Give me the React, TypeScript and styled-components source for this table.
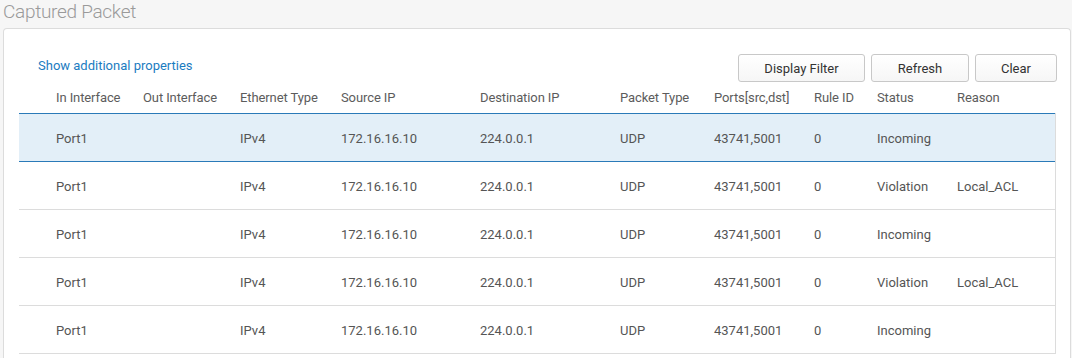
import React from "react";
import styled, { createGlobalStyle } from "styled-components";

const Global = createGlobalStyle`
  html, body { margin: 0; padding: 0; background: #f6f6f6; }
  body { font-family: Roboto, "Liberation Sans", sans-serif; width: 1072px; height: 358px; overflow: hidden; }
`;

const Page = styled.div`
  padding: 0 1px 0 3px;
`;

const Title = styled.h1`
  margin: 0;
  height: 28px;
  font-size: 19px;
  font-weight: 300;
  line-height: 24px;
  color: #9a9a9a;
  letter-spacing: -0.3px;
`;

const Panel = styled.div`
  background: #fff;
  border: 1px solid #dcdcdc;
  border-bottom: none;
  border-radius: 4px 4px 0 0;
  padding: 25px 14px 0 15px;
  height: 330px;
  box-sizing: border-box;
`;

const Toolbar = styled.div`
  display: flex;
  align-items: center;
  justify-content: space-between;
  padding-left: 19px;
  margin-right: -1px;
`;

const Link = styled.a`
  font-size: 13px;
  color: #1b7cc1;
  text-decoration: none;
  cursor: pointer;
  margin-top: -6px;
`;

const Buttons = styled.div`
  display: flex;
  gap: 6px;
`;

const Button = styled.button<{ $w: number }>`
  width: ${(p) => p.$w}px;
  height: 28px;
  border: 1px solid #c8c8c8;
  border-radius: 3px;
  background: linear-gradient(#ffffff, #f6f6f6);
  font-family: inherit;
  font-size: 13px;
  color: #333;
  padding: 0;
`;

const cols = "87px 97px 101px 139px 140px 94px 100px 63px 80px 1fr";

const Table = styled.div`
  margin-top: 2px;
`;

const HeadRow = styled.div`
  display: grid;
  grid-template-columns: ${cols};
  padding-left: 37px;
  padding-bottom: 2px;
  height: 29px;
  box-sizing: border-box;
  align-items: center;
  font-size: 13px;
  font-weight: 400;
  color: #5c5c5c;
  letter-spacing: -0.1px;
`;

const Body = styled.div`
  border-right: 1px solid #dcdcdc;
`;

const Row = styled.div<{ $selected?: boolean }>`
  display: grid;
  grid-template-columns: ${cols};
  padding-left: 37px;
  padding-top: 2px;
  height: ${(p) => (p.$selected ? 49 : 48)}px;
  box-sizing: border-box;
  align-items: center;
  font-size: 13px;
  color: #555;
  background: ${(p) => (p.$selected ? "#e3eff8" : "#fff")};
  border-top: ${(p) => (p.$selected ? "1px solid #2a7ab8" : "none")};
  border-bottom: 1px solid ${(p) => (p.$selected ? "#2a7ab8" : "#dcdcdc")};
`;

const Cell = styled.span`
  white-space: nowrap;
`;

const headers = [
  "In Interface",
  "Out Interface",
  "Ethernet Type",
  "Source IP",
  "Destination IP",
  "Packet Type",
  "Ports[src,dst]",
  "Rule ID",
  "Status",
  "Reason",
];

const rows = [
  { status: "Incoming", reason: "" },
  { status: "Violation", reason: "Local_ACL" },
  { status: "Incoming", reason: "" },
  { status: "Violation", reason: "Local_ACL" },
  { status: "Incoming", reason: "" },
];

export default function App() {
  return (
    <Page>
      <Global />
      <Title>Captured Packet</Title>
      <Panel>
        <Toolbar>
          <Link>Show additional properties</Link>
          <Buttons>
            <Button $w={127}>Display Filter</Button>
            <Button $w={98}>Refresh</Button>
            <Button $w={82}>Clear</Button>
          </Buttons>
        </Toolbar>
        <Table>
          <HeadRow>
            {headers.map((h) => (
              <Cell key={h}>{h}</Cell>
            ))}
          </HeadRow>
          <Body>
            {rows.map((r, i) => (
              <Row key={i} $selected={i === 0}>
                <Cell>Port1</Cell>
                <Cell></Cell>
                <Cell>IPv4</Cell>
                <Cell>172.16.16.10</Cell>
                <Cell>224.0.0.1</Cell>
                <Cell>UDP</Cell>
                <Cell>43741,5001</Cell>
                <Cell>0</Cell>
                <Cell>{r.status}</Cell>
                <Cell>{r.reason}</Cell>
              </Row>
            ))}
          </Body>
        </Table>
      </Panel>
    </Page>
  );
}
